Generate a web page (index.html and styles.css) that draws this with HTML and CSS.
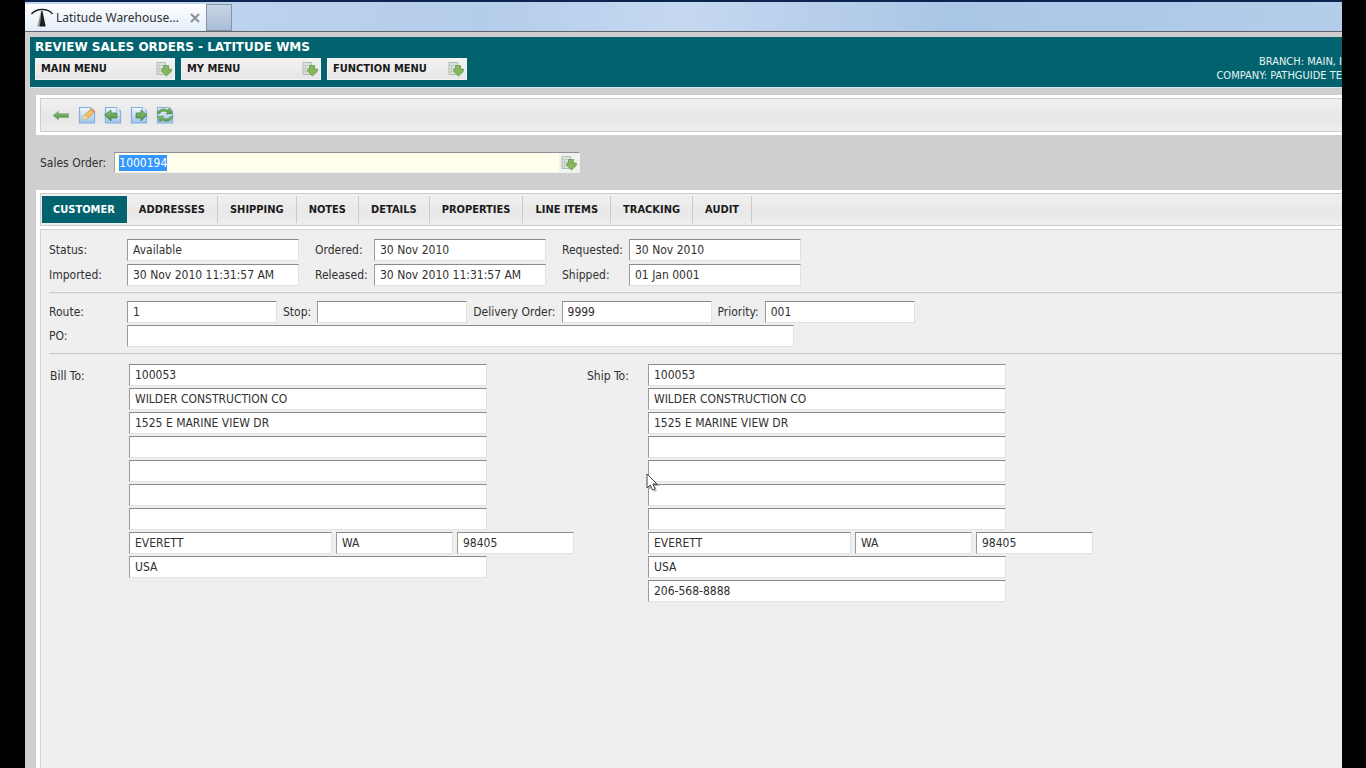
FILE: index.html
```html
<!DOCTYPE html>
<html lang="en">
<head>
<meta charset="utf-8">
<title>Latitude Warehouse</title>
<link rel="stylesheet" href="styles.css">
</head>
<body>
<svg class="defs" width="0" height="0" aria-hidden="true">
  <defs>
    <linearGradient id="sky" x1="0" y1="0" x2="0" y2="1"><stop offset="0" stop-color="#f2f8fc"/><stop offset="1" stop-color="#9cc4ec"/></linearGradient>
    <linearGradient id="leaf" x1="0" y1="0" x2="0" y2="1"><stop offset="0" stop-color="#8cbf78"/><stop offset="1" stop-color="#4f8f45"/></linearGradient>
    <symbol id="drop" viewBox="0 0 16 16">
      <path d="M1 1.500h8.500v12H1z" fill="#dfe3e0" stroke="#b4bab5"/>
      <path d="M1 4.500h8.500M1 7.500h5M1 10.500h5M3.500 4.500v9" stroke="#c4c9c5" fill="none"/>
      <path d="M7.500 4.500h5V8h2.800v2.500L10.500 15 5.800 10.500V8h1.700z" fill="#84b55f" stroke="#679d4e" stroke-width=".8"/>
    </symbol>
    <symbol id="page" viewBox="0 0 18 18">
      <path d="M1.500 1.500h11l4 3.500v12h-15z" fill="url(#sky)" stroke="#86ade0" stroke-width="1.200"/>
      <path d="M12.500 1.500v3.500h4" fill="#fff" stroke="#9dbbe0"/>
    </symbol>
  </defs>
</svg>
<div class="window">
  <header class="browser">
    <div class="browser-tab">
      <svg class="favicon" viewBox="0 0 24 20" width="24" height="20" aria-hidden="true">
        <path d="M1.500 6Q5 1.800 12 1.600T22.500 6" fill="none" stroke="#222" stroke-width="1.500"/>
        <path d="M11 3L7.500 18.500h2.800z" fill="#888"/><path d="M11.300 3h1.200l3.200 15.500H9.800z" fill="#1c1c1c"/>
      </svg>
      <span class="browser-tab-title">Latitude Warehouse...</span>
      <button class="tab-close" aria-label="Close tab"><svg viewBox="0 0 10 10" width="10" height="10"><path d="M1 1l8 8M9 1L1 9" stroke="#8b8f94" stroke-width="2"/></svg></button>
    </div>
    <button class="new-tab" aria-label="New tab"></button>
  </header>
  <div class="app">
    <div class="masthead">
      <div class="masthead-main">
        <h1 class="title">REVIEW SALES ORDERS - LATITUDE WMS</h1>
        <nav class="menus">
          <button class="menu">MAIN MENU<svg width="16" height="16"><use href="#drop"/></svg></button>
          <button class="menu">MY MENU<svg width="16" height="16"><use href="#drop"/></svg></button>
          <button class="menu">FUNCTION MENU<svg width="16" height="16"><use href="#drop"/></svg></button>
        </nav>
      </div>
      <div class="session">BRANCH: MAIN, I<br>COMPANY: PATHGUIDE TE</div>
    </div>
    <main class="content">
      <div class="frame">
        <div class="toolbar">
          <button class="tool" aria-label="Back"><svg width="18" height="18" viewBox="0 0 18 18"><path d="M1 9.500L6.500 5.500v2.300h10v3.600h-10v2.300z" fill="url(#leaf)" stroke="#76a86c" stroke-width=".7"/></svg></button>
          <button class="tool" aria-label="Edit"><svg width="18" height="18" viewBox="0 0 18 18"><use href="#page"/><path d="M4.500 14l1.500-4.500L13.500 2.500l3.500 3L9.500 12.500z" fill="#f0bd62" stroke="#c9924a" stroke-width=".8"/><path d="M4.500 14l1.500-4.500 3.500 3z" fill="#f2dcc0"/><path d="M13.500 2.500l3.500 3-1.500 1.300-3.400-3z" fill="#dd9a84"/></svg></button>
          <button class="tool" aria-label="Previous"><svg width="18" height="18" viewBox="0 0 18 18"><use href="#page"/><path d="M.5 9L7 4v3h6v5H7v3z" fill="url(#leaf)" stroke="#3f7f42" stroke-width=".7"/></svg></button>
          <button class="tool" aria-label="Next"><svg width="18" height="18" viewBox="0 0 18 18"><use href="#page"/><path d="M17 9l-6-5v3H6v5h5v3z" fill="url(#leaf)" stroke="#3f7f42" stroke-width=".7"/></svg></button>
          <button class="tool" aria-label="Refresh"><svg width="18" height="18" viewBox="0 0 18 18"><use href="#page"/><path d="M1 7.500C2 3 8 1.500 12 4l2-2.200 2.500 6L10 8l1.500-1.800C8 4.500 5 5 4 7.500z" fill="url(#leaf)" stroke="#5a9458" stroke-width=".6"/><path d="M17 10.500C16 15 10 16.500 6 14l-2 2.200-2.500-6L8 10l-1.500 1.800c3.500 1.700 6.500 1.200 7.500-1.300z" fill="url(#leaf)" stroke="#5a9458" stroke-width=".6"/></svg></button>
        </div>
      </div>
      <div class="search">
        <label for="so">Sales Order:</label>
        <div class="lookup"><input id="so" class="lookup-input" value="1000194"><button class="lookup-button" aria-label="Look up"><svg width="16" height="16"><use href="#drop"/></svg></button></div>
      </div>
      <div class="frame frame-fill">
        <nav class="tabs">
          <button class="tab tab-active">CUSTOMER</button><button class="tab">ADDRESSES</button><button class="tab">SHIPPING</button><button class="tab">NOTES</button><button class="tab">DETAILS</button><button class="tab">PROPERTIES</button><button class="tab">LINE ITEMS</button><button class="tab">TRACKING</button><button class="tab">AUDIT</button>
        </nav>
        <form class="details">
          <section class="section dates">
            <label for="st">Status:</label><input id="st" value="Available">
            <label for="or">Ordered:</label><input id="or" value="30 Nov 2010">
            <label for="rq">Requested:</label><input id="rq" value="30 Nov 2010">
            <label for="im">Imported:</label><input id="im" value="30 Nov 2010 11:31:57 AM">
            <label for="re">Released:</label><input id="re" value="30 Nov 2010 11:31:57 AM">
            <label for="sh">Shipped:</label><input id="sh" value="01 Jan 0001">
          </section>
          <section class="section routing">
            <div class="line">
              <label class="lead" for="ro">Route:</label><input id="ro" class="short" value="1">
              <label for="sp">Stop:</label><input id="sp" class="short" value="">
              <label for="de">Delivery Order:</label><input id="de" class="short" value="9999">
              <label for="pr">Priority:</label><input id="pr" class="short" value="001">
            </div>
            <div class="line"><label class="lead" for="po">PO:</label><input id="po" class="po" value=""></div>
          </section>
          <section class="parties">
            <div class="party">
              <label class="bill-label" for="b1">Bill To:</label>
              <div class="address">
                <input id="b1" class="wide" value="100053">
                <input class="wide" aria-label="Bill name" value="WILDER CONSTRUCTION CO">
                <input class="wide" aria-label="Bill address 1" value="1525 E MARINE VIEW DR">
                <input class="wide" aria-label="Bill address 2" value="">
                <input class="wide" aria-label="Bill address 3" value="">
                <input class="wide" aria-label="Bill address 4" value="">
                <input class="wide" aria-label="Bill address 5" value="">
                <div class="city-row"><input class="city" aria-label="Bill city" value="EVERETT"><input class="part" aria-label="Bill state" value="WA"><input class="part" aria-label="Bill zip" value="98405"></div>
                <input class="wide" aria-label="Bill country" value="USA">
              </div>
            </div>
            <div class="party">
              <label class="ship-label" for="s1">Ship To:</label>
              <div class="address">
                <input id="s1" class="wide" value="100053">
                <input class="wide" aria-label="Ship name" value="WILDER CONSTRUCTION CO">
                <input class="wide" aria-label="Ship address 1" value="1525 E MARINE VIEW DR">
                <input class="wide" aria-label="Ship address 2" value="">
                <input class="wide" aria-label="Ship address 3" value="">
                <input class="wide" aria-label="Ship address 4" value="">
                <input class="wide" aria-label="Ship address 5" value="">
                <div class="city-row"><input class="city" aria-label="Ship city" value="EVERETT"><input class="part" aria-label="Ship state" value="WA"><input class="part" aria-label="Ship zip" value="98405"></div>
                <input class="wide" aria-label="Ship country" value="USA">
                <input class="wide" aria-label="Ship phone" value="206-568-8888">
                <svg class="pointer" width="14" height="20" viewBox="0 0 14 20" aria-hidden="true"><path d="M3 3v14l3-3 2 5 3-1-2-5h5z" fill="#000" opacity=".25"/><path d="M1 1v14l3.300-3 2.200 5 2.600-1.100L6.900 11H11z" fill="#fff" stroke="#444"/></svg>
              </div>
            </div>
          </section>
        </form>
      </div>
    </main>
  </div>
</div>
<script src="app.js"></script>
</body>
</html>
```
FILE: app.js
```js
const order = document.getElementById('so');
order.focus();
order.select();
```
FILE: styles.css
```css
* { box-sizing: border-box; }
body {
  margin: 0;
  padding: 0 24px 0 25px;
  background: #000;
  color: #303030;
  font: 12px/16px "DejaVu Sans Condensed", "Noto Sans", sans-serif;
}
button, input { margin: 0; font: inherit; color: inherit; }
button { padding: 0; border: 0; background: none; }
svg { display: block; }
.defs { position: absolute; }
.window { display: flex; flex-direction: column; min-height: 100vh; overflow: hidden; background: #cfcfcf; }

.browser {
  display: flex;
  align-items: flex-end;
  height: 32px;
  border-top: 2px solid #0c2450;
  border-bottom: 1px solid #5c6470;
  background: linear-gradient(90deg, #c3d7f0, #b4cdea 35%, #c5d8f0 50%, #aac6e6 70%, #b3cdea);
}
.browser-tab {
  display: flex;
  align-items: center;
  width: 182px;
  height: 27px;
  padding: 0 6px 0 5px;
  background: linear-gradient(#fdfeff, #e3edf9);
  border-right: 1px solid #8593a8;
}
.browser-tab-title { flex: 1; margin-left: 2px; font-family: "Noto Sans", sans-serif; white-space: nowrap; }
.new-tab { width: 25px; height: 27px; border: 1px solid #8593a8; border-left: 0; background: linear-gradient(#c8d5e6, #a9bcd6); }

.app { display: flex; flex: 1; flex-direction: column; padding: 5px 0 0 5px; }
.masthead {
  display: flex;
  justify-content: space-between;
  height: 51px;
  padding: 2px 0 0 5px;
  background: #02636e;
  border-bottom: 1px solid #d9e6e8;
}
.title { margin: 0 0 3px; color: #fff; font-family: "DejaVu Sans", sans-serif; font-size: 12px; line-height: 16px; }
.menus { display: flex; gap: 6px; }
.menu {
  display: flex;
  align-items: center;
  justify-content: space-between;
  width: 140px;
  height: 22px;
  padding: 0 2px 0 5px;
  background: linear-gradient(#f2f2f2, #e6e6e6);
  border: 1px solid #f4f4f4;
  color: #1a1a1a;
  font-size: 11px;
  font-weight: bold;
}
.session { padding-top: 16px; color: #e8f4f5; font-size: 11px; line-height: 14px; text-align: right; white-space: nowrap; }

.content { display: flex; flex: 1; flex-direction: column; padding: 7px 0 0 6px; }
.frame { padding: 3px 0 3px 4px; background: #fff; }
.toolbar {
  display: flex;
  align-items: center;
  gap: 8px;
  height: 34px;
  padding-left: 11px;
  border: 1px solid #cdcdcd;
  border-right: 0;
  background: linear-gradient(#f0f0f0, #e7e7e7 60%, #eee);
}
.search { display: flex; align-items: center; gap: 8px; height: 55px; padding-left: 4px; }
.lookup { display: flex; width: 466px; height: 21px; border: 1px solid #f0f0ec; border-top-color: #8f8f9a; border-left-color: #a5a5a5; background: #ffffec; }
.lookup-input { flex: 1; padding: 0 4px; border: 0; outline: 0; background: none; }
.lookup-input::selection { background: #3397fd; color: #fff; }
.lookup-button { padding: 0 2px; background: #f1f1ee; }

.frame-fill { flex: 1; display: flex; flex-direction: column; padding-bottom: 0; }
.tabs {
  display: flex;
  height: 33px;
  padding: 2px 0 2px 1px;
  border: 1px solid #cdcdcd;
  border-right: 0;
  background: linear-gradient(#f0f0f0, #e8e8e8 60%, #efefef);
}
.tab { padding: 0 12px; border-right: 1px solid #cacaca; color: #1a1a1a; font-size: 11px; font-weight: bold; }
.tab-active { padding: 0 11px; background: #02636e; border-color: #02636e; color: #fff; }
.details { flex: 1; margin-top: 3px; padding: 9px 0 0 8px; border: 1px solid #d4d4d4; border-width: 1px 0 0 1px; background: #efefef; }
.details input {
  height: 22px;
  min-width: 0;
  padding: 0 5px;
  border: 1px solid #e2e2e2;
  border-top-color: #8a8a8a;
  border-left-color: #9a9a9a;
  background: #fff;
}
.section { margin-bottom: 8px; padding-bottom: 6px; border-bottom: 1px solid #cbcbcb; box-shadow: 0 1px #e6e6e6; }
.dates { display: grid; grid-template-columns: 78px 188px 59px 188px 67px 171px; gap: 3px 0; align-items: center; }
.dates input { width: 172px; }
.routing { display: grid; gap: 2px; }
.line { display: flex; align-items: center; gap: 6px; }
.lead { width: 72px; }
.short { width: 150px; }
.po { width: 667px; }
.parties { display: flex; gap: 12px; padding-top: 2px; }
.party { display: flex; align-items: flex-start; }
.party > label { padding: 4px 0 0 1px; }
.bill-label { width: 80px; }
.ship-label { width: 62px; }
.address { position: relative; display: grid; gap: 2px; width: 445px; }
.wide { width: 358px; }
.city-row { display: flex; gap: 4px; }
.city { width: 203px; }
.part { width: 117px; }
.pointer { position: absolute; left: -2px; top: 109px; }
```
